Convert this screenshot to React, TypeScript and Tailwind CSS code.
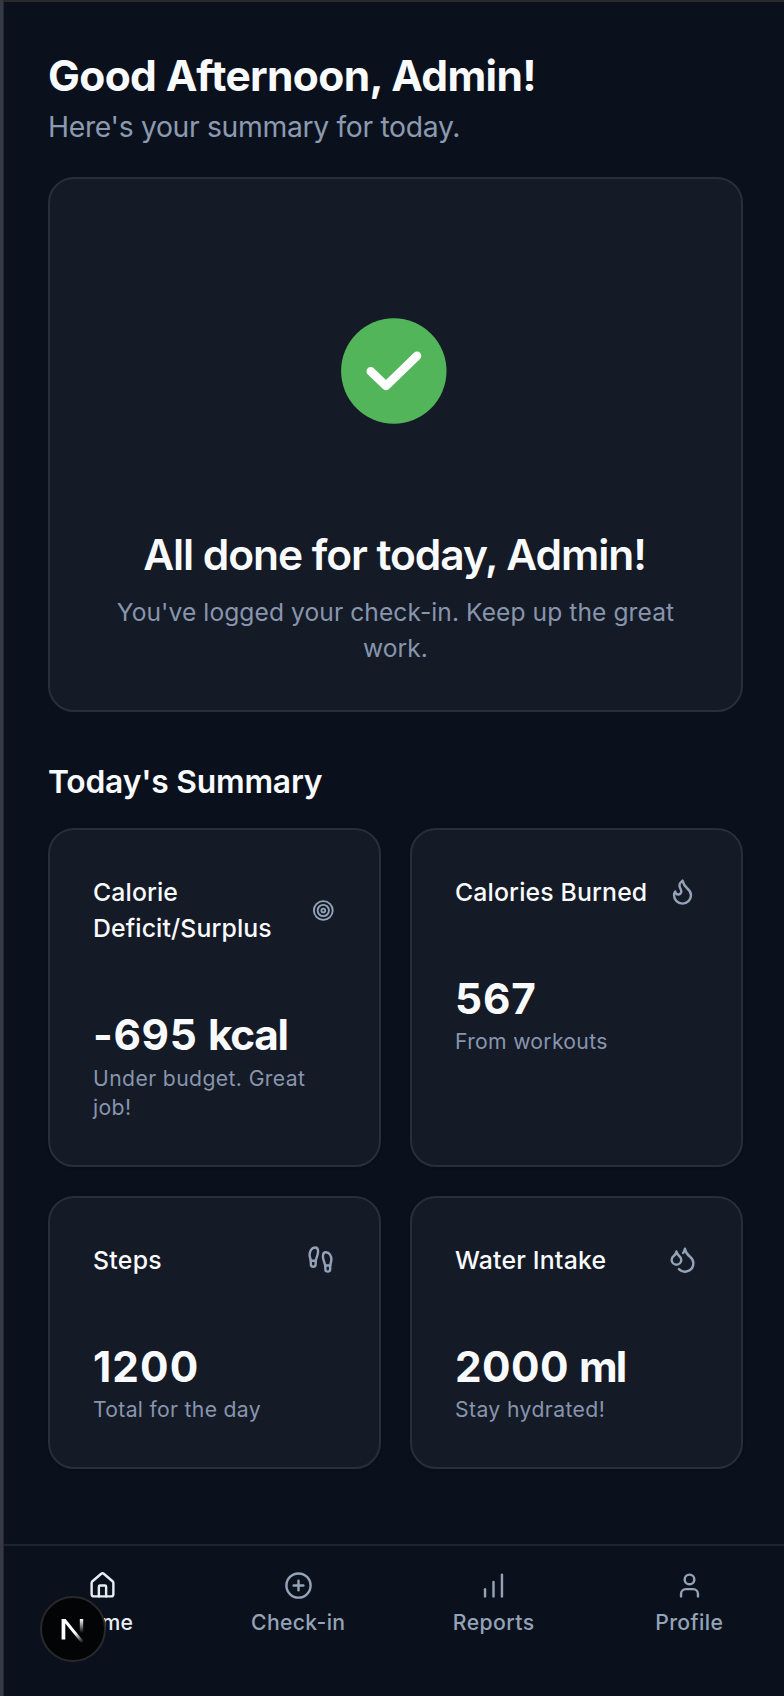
import React from "react";
import { Target, Footprints, Droplets, Flame, House, CirclePlus, ChartNoAxesColumnIncreasing, User } from "lucide-react";

type CardProps = {
  title: React.ReactNode;
  titleClass: string;
  value: string;
  valueClass: string;
  unit?: string;
  unitClass?: string;
  note: React.ReactNode;
  noteClass: string;
  icon: React.ReactNode;
};

function StatCard({ title, titleClass, value, valueClass, unit, unitClass = "", note, noteClass, icon }: CardProps) {
  return (
    <section className="flex flex-col rounded-[26px] border-2 border-[#2a2e39] bg-[#151a27] pt-[44px] pr-[44px] pl-[43px] shadow-sm">
      <div className="flex items-center justify-between text-[#94a3b8]">
        <h3 className={"text-[24.8px] leading-[36px] font-[480] whitespace-nowrap text-[#f8fafc] " + titleClass}>{title}</h3>
        {icon}
      </div>
      <div className="mt-[60px] flex flex-col items-start">
        <span className={"text-[42.3px] leading-[58px] font-bold whitespace-nowrap text-[#f8fafc] " + valueClass}>
          {value}
          {unit && <span className={unitClass}> {unit}</span>}
        </span>
        <span className={"text-[21.2px] leading-[29px] whitespace-nowrap text-[#8795ad] " + noteClass}>{note}</span>
      </div>
    </section>
  );
}

function NavItem({ icon, label, active, labelClass }: { icon: React.ReactNode; label: string; active?: boolean; labelClass: string }) {
  return (
    <a className={"flex flex-col items-center " + (active ? "text-[#e8edf5]" : "text-[#94a3b8]")}>
      {icon}
      <span className={"mt-[8px] text-[21.2px] leading-[29px] font-[480] whitespace-nowrap " + labelClass}>{label}</span>
    </a>
  );
}

export default function App() {
  return (
    <div className="flex h-[1696px] w-[784px] overflow-hidden bg-[#0b111c] font-['Inter','Liberation_Sans',sans-serif]">
      <div className="w-[4px] shrink-0 border-r border-[#282a31] bg-[#343847]" />
      <div className="relative flex w-[780px] flex-col border-t-2 border-[#292a2b]">
        <main className="flex h-[1542px] flex-col pr-[41px] pl-[44px]">
          <header className="flex flex-col items-start pt-[45px]">
            <h1 className="text-[42.5px] leading-[58px] font-bold tracking-[-0.65px] whitespace-nowrap text-[#f8fafc]">Good Afternoon, Admin!</h1>
            <p className="text-[28.3px] leading-[44px] tracking-[-0.32px] whitespace-nowrap text-[#8c9ab1]">Here's your summary for today.</p>
          </header>

          <section className="mt-[28px] flex h-[535px] flex-col items-center rounded-[26px] border-2 border-[#2a2e39] bg-[#151a27]">
            <svg className="mt-[139px] mr-[4px] h-[106px] w-[106px]" viewBox="0 0 106 106" fill="none">
              <circle cx="52.8" cy="53" r="52.7" fill="#53b55a" />
              <path d="M29.8 53.3 45 67.8 76 37.8" stroke="#fff" strokeWidth="8.6" strokeLinecap="round" strokeLinejoin="round" />
            </svg>
            <h2 className="mt-[102px] mr-[2px] text-[42.5px] leading-[58px] font-semibold tracking-[-1.06px] whitespace-nowrap text-[#f8fafc]">All done for today, Admin!</h2>
            <p className="mt-[10px] text-center text-[24.6px] leading-[36px] tracking-[0.07px] text-[#8795ad]">
              You've logged your check-in. Keep up the great
              <br />
              work.
            </p>
          </section>

          <h2 className="mt-[45px] self-start text-[31.8px] leading-[50px] font-semibold tracking-[-0.2px] whitespace-nowrap text-[#f8fafc]">Today's Summary</h2>

          <div className="mt-[21px] grid grid-cols-2 grid-rows-[339px_273px] gap-[29px]">
            <StatCard
              title={<>Calorie<br />Deficit/Surplus</>}
              titleClass="tracking-[0.12px]"
              value="-695"
              unit="kcal"
              unitClass="ml-[2px] tracking-[-1.3px]"
              valueClass="tracking-[0.65px]"
              note={<>Under budget. Great<br />job!</>}
              noteClass="tracking-[0.38px]"
              icon={<Target className="h-[29px] w-[22.6px]" />}
            />
            <StatCard title="Calories Burned" titleClass="tracking-[0.15px]" value="567" valueClass="tracking-[0.9px]" note="From workouts" noteClass="-mt-px tracking-[0.28px]" icon={<Flame className="mb-[2px] h-[29px] w-[29px]" />} />
            <StatCard title="Steps" titleClass="tracking-[0.3px]" value="1200" valueClass="tracking-[1.1px]" note="Total for the day" noteClass="-mt-px tracking-[0.3px]" icon={<Footprints className="mb-[2px] h-[29px] w-[29px]" />} />
            <StatCard title="Water Intake" titleClass="tracking-[0.2px]" value="2000" unit="ml" unitClass="ml-[2px] tracking-[-1.8px]" valueClass="tracking-[0.4px]" note="Stay hydrated!" noteClass="-mt-px tracking-[0.38px]" icon={<Droplets className="mb-[2px] h-[29px] w-[29px]" />} />
          </div>
        </main>

        <nav className="grid h-[152px] grid-cols-[195.5px_195.5px_195.5px_195.5px] border-t-2 border-[#1f232e] pt-[25px] pl-px">
          <NavItem active icon={<House className="h-[29px] w-[29px]" />} label="Home" labelClass="tracking-[0.35px]" />
          <NavItem icon={<CirclePlus className="h-[29px] w-[29px]" />} label="Check-in" labelClass="tracking-[0.35px]" />
          <NavItem icon={<ChartNoAxesColumnIncreasing className="h-[29px] w-[29px]" />} label="Reports" labelClass="tracking-[0.45px]" />
          <NavItem icon={<User className="h-[29px] w-[29px]" />} label="Profile" labelClass="tracking-[0.4px]" />
        </nav>

        <div className="absolute top-[1594px] left-[36px] flex h-[66px] w-[66px] items-center justify-center rounded-full border-2 border-[#292929] bg-[#030406]">
          <svg className="h-[28px] w-[24px]" viewBox="0 0 24 28" fill="none">
            <defs>
              <linearGradient id="diag" x1="14" y1="18" x2="21.5" y2="28" gradientUnits="userSpaceOnUse">
                <stop stopColor="#fff" />
                <stop offset="1" stopColor="#fff" stopOpacity="0" />
              </linearGradient>
              <linearGradient id="stem" x1="20" y1="4" x2="20" y2="18" gradientUnits="userSpaceOnUse">
                <stop stopColor="#fff" />
                <stop offset="1" stopColor="#fff" stopOpacity="0" />
              </linearGradient>
            </defs>
            <path d="M.6 4h4L22.8 26.4 20.2 28 4.3 8.6v15.9H.6z" fill="url(#diag)" />
            <path d="M18.8 4h3.4v14h-3.4z" fill="url(#stem)" />
          </svg>
        </div>
      </div>
    </div>
  );
}
